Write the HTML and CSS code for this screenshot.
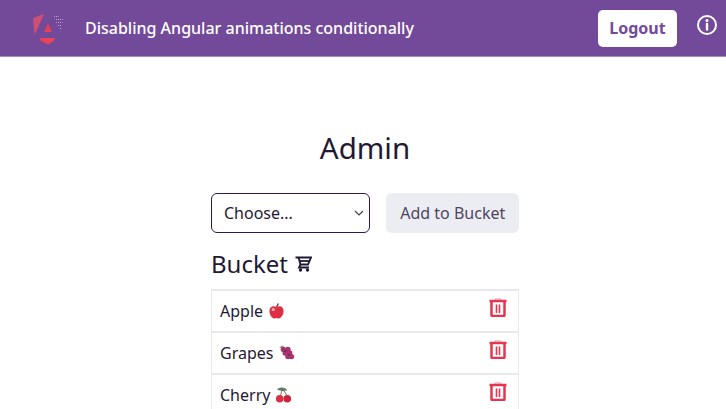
FILE: index.html
```html
<!DOCTYPE html>
<html lang="en">
<head>
  <meta charset="UTF-8" />
  <meta name="viewport" content="width=device-width, initial-scale=1" />
  <title>Disabling Angular animations conditionally</title>
  <link rel="stylesheet" href="styles.css">
</head>
<body>
  <header class="navbar">
    <svg class="logo" width="34" height="36" viewBox="0 0 34 36">
      <defs>
        <pattern id="dots-red" width="2" height="2" patternUnits="userSpaceOnUse">
          <rect width="2" height="2" fill="#d8506f" />
          <rect width="1" height="1" fill="#e8405a" />
          <rect x="1" y="1" width="1" height="1" fill="#a85a96" />
        </pattern>
        <pattern id="dots-light" width="2" height="3" patternUnits="userSpaceOnUse">
          <rect width="1" height="1" fill="#c0a4d0" />
        </pattern>
      </defs>
      <path d="M14 4 L3 8 L4.500 25 Z" fill="url(#dots-red)" />
      <path d="M22 4 L33 8 L31 22 Z" fill="url(#dots-light)" />
      <path d="M18 13 L22 22 L14 22 Z" fill="#e0405a" />
      <path d="M10 28 H25 L24 31 L18 34.500 L11 31 Z" fill="#e8445a" />
    </svg>
    <span class="brand">Disabling Angular animations conditionally</span>
    <button class="logout">Logout</button>
    <svg class="info" width="22" height="22" viewBox="0 0 22 22" fill="none" stroke="#fff" stroke-width="2">
      <circle cx="11" cy="11" r="9" />
      <path d="M11 10 V15.500" stroke-width="2.400" stroke-linecap="round" />
      <circle cx="11" cy="6.500" r="1.500" fill="#fff" stroke="none" />
    </svg>
  </header>

  <main class="content">
    <h1>Admin</h1>
    <div class="add-form">
      <select class="fruit-select">
        <option>Choose...</option>
      </select>
      <button class="add-btn">Add to Bucket</button>
    </div>

    <h2 class="bucket-title">
      Bucket
      <svg width="17" height="16" viewBox="0 0 17 16" fill="none" stroke="#1f1933" stroke-width="1.800">
        <path d="M0.500 1.500 H16 L13 8.500 H5.500 L3.500 1.500" />
        <path d="M4 5 H14.500" />
        <path d="M5.500 8.500 L4 11.500 H14" />
        <circle cx="5.500" cy="14" r="1.700" fill="#1f1933" stroke="none" />
        <circle cx="12.500" cy="14" r="1.700" fill="#1f1933" stroke="none" />
      </svg>
    </h2>

    <ul class="bucket">
      <li class="bucket-item">
        <span class="fruit">Apple
          <svg class="emoji" width="17" height="18" viewBox="0 0 18 18">
            <path d="M9 5 L11 1" stroke="#5b3a2a" stroke-width="1.500" />
            <path d="M9 5 C6 3 1.500 4 1.500 9 C1.500 14 5 17 7 17 C8 17 8.500 16.500 9 16.500 C9.500 16.500 10 17 11 17 C13 17 16.500 14 16.500 9 C16.500 4 12 3 9 5 Z" fill="#dd2e44" />
            <rect x="4" y="6" width="3" height="3" fill="#f4a6b0" />
          </svg>
        </span>
        <svg class="trash" width="18" height="19" viewBox="0 0 18 19" fill="none" stroke="#e8344f" stroke-width="2.500">
          <path d="M0.500 3 H17.500" />
          <path d="M6 2 V1 H12 V2" stroke-width="1" stroke="#d890a0" />
          <path d="M2.500 3 V17 Q2.500 18 3.500 18 H14.500 Q15.500 18 15.500 17 V3" />
          <path d="M7.500 6.500 V15 M10.500 6.500 V15" stroke-width="1.600" />
        </svg>
      </li>
      <li class="bucket-item">
        <span class="fruit">Grapes
          <svg class="emoji" width="18" height="18" viewBox="0 0 20 18">
            <path d="M2 3 L6 1" stroke="#77b255" stroke-width="1.500" />
            <g fill="#a8326e">
              <circle cx="6" cy="5" r="3" />
              <circle cx="11" cy="5" r="3" />
              <circle cx="8" cy="9" r="3" />
              <circle cx="13" cy="9" r="3" />
              <circle cx="11" cy="13" r="3" />
              <circle cx="15" cy="13" r="3" />
            </g>
            <g fill="#3b3560">
              <circle cx="8" cy="7" r="1" />
              <circle cx="12" cy="11" r="1" />
            </g>
          </svg>
        </span>
        <svg class="trash" width="18" height="19" viewBox="0 0 18 19" fill="none" stroke="#e8344f" stroke-width="2.500">
          <path d="M0.500 3 H17.500" />
          <path d="M6 2 V1 H12 V2" stroke-width="1" stroke="#d890a0" />
          <path d="M2.500 3 V17 Q2.500 18 3.500 18 H14.500 Q15.500 18 15.500 17 V3" />
          <path d="M7.500 6.500 V15 M10.500 6.500 V15" stroke-width="1.600" />
        </svg>
      </li>
      <li class="bucket-item">
        <span class="fruit">Cherry
          <svg class="emoji" width="17" height="18" viewBox="0 0 18 18">
            <path d="M2 3 C6 0 11 1 13 4 C9 5 5 5 2 3 Z" fill="#6b7a6a" />
            <path d="M6 11 C6 8 7 5 8 3 M13 11 C12 8 10 5 8 3" stroke="#5b6b4a" stroke-width="1" fill="none" />
            <circle cx="5" cy="13" r="4" fill="#dd2e44" />
            <circle cx="13" cy="13" r="4" fill="#c9243a" />
          </svg>
        </span>
        <svg class="trash" width="18" height="19" viewBox="0 0 18 19" fill="none" stroke="#e8344f" stroke-width="2.500">
          <path d="M0.500 3 H17.500" />
          <path d="M6 2 V1 H12 V2" stroke-width="1" stroke="#d890a0" />
          <path d="M2.500 3 V17 Q2.500 18 3.500 18 H14.500 Q15.500 18 15.500 17 V3" />
          <path d="M7.500 6.500 V15 M10.500 6.500 V15" stroke-width="1.600" />
        </svg>
      </li>
    </ul>
  </main>
</body>
</html>
```

FILE: styles.css
```css
html, body {
  height: 409px;
  overflow: hidden;
}

body {
  font-family: "Noto Sans", "Open Sans", sans-serif;
  margin: 0;
  padding: 0;
  background: #fff;
  color: #1f1933;
}

.navbar {
  display: flex;
  align-items: center;
  height: 56px;
  background-color: #734a9a;
  border-bottom: 1px solid #a58bbd;
  padding: 0 8px 0 30px;
}

.logo {
  flex-shrink: 0;
}

.brand {
  margin-left: 21px;
  color: #fff;
  font-size: 16px;
  font-weight: 500;
}

.logout {
  margin-left: auto;
  width: 79px;
  height: 37px;
  border: none;
  border-radius: 5px;
  background: #fff;
  color: #734a9a;
  font-family: inherit;
  font-size: 16px;
  font-weight: 700;
}

.info {
  align-self: flex-start;
  margin: 14px 0 0 19px;
}

.content {
  width: 308px;
  margin-left: 211px;
}

h1 {
  margin: 71px 0 25px;
  text-align: center;
  font-size: 29.500px;
  font-weight: 400;
  line-height: 40px;
}

.add-form {
  display: flex;
  gap: 16px;
}

.fruit-select {
  appearance: none;
  width: 160px;
  height: 40px;
  padding: 0 12px;
  border: 1.500px solid #2e1a50;
  border-radius: 6px;
  background: #fff url("data:image/svg+xml,%3Csvg xmlns='http://www.w3.org/2000/svg' viewBox='0 0 10 6'%3E%3Cpath d='M1 1l4 4 4-4' fill='none' stroke='%23444' stroke-width='1.200'/%3E%3C/svg%3E") no-repeat right 5px center / 10px 6px;
  color: #1f1933;
  font-family: inherit;
  font-size: 16px;
}

.add-btn {
  width: 133px;
  height: 40px;
  border: none;
  border-radius: 6px;
  background: #ecedf2;
  color: #4f4560;
  font-family: inherit;
  font-size: 16px;
}

.bucket-title {
  display: flex;
  align-items: center;
  gap: 7px;
  margin: 15px 0 9px;
  font-size: 24px;
  font-weight: 400;
  line-height: 32px;
}

.bucket {
  list-style: none;
  margin: 0;
  padding: 0;
  border-left: 1px solid #e8e8ee;
  border-right: 1px solid #e8e8ee;
  border-top: 2px solid #e8e8ee;
}

.bucket-item {
  display: flex;
  justify-content: space-between;
  align-items: center;
  height: 40px;
  padding: 0 11px 0 8px;
  border-bottom: 2px solid #e8e8ee;
}

.fruit {
  display: flex;
  align-items: center;
  gap: 5px;
  font-size: 16px;
}

.emoji {
  flex-shrink: 0;
}

.trash {
  flex-shrink: 0;
  margin-bottom: 7px;
}
```
